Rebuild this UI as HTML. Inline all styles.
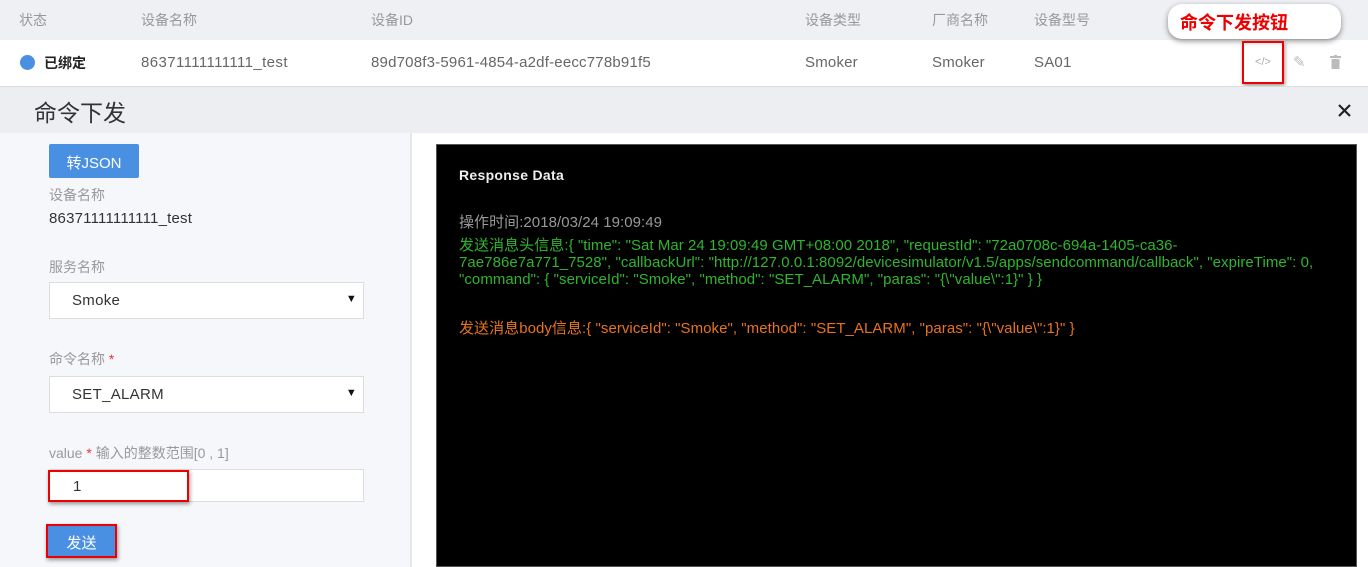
<!DOCTYPE html>
<html><head><meta charset="utf-8"><style>
*{margin:0;padding:0;box-sizing:border-box}
body{width:1368px;height:567px;overflow:hidden;position:relative;background:#fff;font-family:"Liberation Sans","Noto Sans CJK SC",sans-serif;font-size:14px;color:#333}
.a{position:absolute;white-space:nowrap}
.h{color:#999;font-size:14px;top:10px}
.r{color:#666;font-size:15px;letter-spacing:.2px;top:54px}
.lbl{color:#999;font-size:14px}
.sel{position:absolute;left:49px;width:315px;height:37px;background:#fff;border:1px solid #ddd;font-size:15px;letter-spacing:.3px;padding:9px 22px;color:#333}
.sel:after{content:"▼";position:absolute;right:6px;top:10px;font-size:11px;color:#111}
.resp{font-size:15px;line-height:17px;letter-spacing:.05px}
</style></head><body>
<div class="a" style="left:0;top:0;width:1368px;height:40px;background:#eff0f4"></div>
<div class="a h" style="left:19px">状态</div>
<div class="a h" style="left:141px">设备名称</div>
<div class="a h" style="left:371px">设备ID</div>
<div class="a h" style="left:805px">设备类型</div>
<div class="a h" style="left:932px">厂商名称</div>
<div class="a h" style="left:1034px">设备型号</div>
<div class="a" style="left:20px;top:55px;width:15px;height:15px;border-radius:50%;background:#4a90e2"></div>
<div class="a" style="left:44px;top:53px;font-weight:bold;color:#222">已绑定</div>
<div class="a r" style="left:141px;letter-spacing:.4px">86371111111111_test</div>
<div class="a r" style="left:371px">89d708f3-5961-4854-a2df-eecc778b91f5</div>
<div class="a r" style="left:805px">Smoker</div>
<div class="a r" style="left:932px">Smoker</div>
<div class="a r" style="left:1034px">SA01</div>
<div class="a" style="left:1168px;top:4px;width:173px;height:35px;background:#fff;border-radius:14px;box-shadow:0 2px 6px rgba(0,0,0,.45);color:#e00;font-weight:bold;font-size:18px;padding:5px 0 0 12px">命令下发按钮</div>
<div class="a" style="left:1242px;top:41px;width:42px;height:43px;border:2px solid #e00;box-shadow:1px 2px 4px rgba(0,0,0,.4);color:#aaa;font-size:11px;text-align:center;padding-top:13px">&lt;/&gt;</div>
<div class="a" style="left:1293px;top:53px;color:#bbb;font-size:15px">✎</div>
<svg class="a" style="left:1330px;top:55px" width="11" height="14"><rect x="0" y="1" width="11" height="2" fill="#bbb"/><rect x="1.5" y="4" width="8" height="10" fill="#bbb"/><rect x="4" y="0" width="3" height="2" fill="#bbb"/></svg>
<div class="a" style="left:0;top:86px;width:1368px;height:1px;background:#ddd"></div>
<div class="a" style="left:0;top:87px;width:1368px;height:46px;background:#eceef2"></div>
<div class="a" style="left:34px;top:94px;font-size:23px;color:#333">命令下发</div>
<svg class="a" style="left:1338px;top:104px" width="13" height="13"><path d="M1 1L12 12M12 1L1 12" stroke="#222" stroke-width="2.2"/></svg>
<div class="a" style="left:0;top:133px;width:412px;height:434px;background:#f6f7fb;border-right:2px solid #e6e7ea"></div>
<div class="a" style="left:49px;top:144px;width:90px;height:34px;background:#4a90e2;color:#fff;font-size:15px;text-align:center;padding-top:8px;border-radius:2px">转JSON</div>
<div class="a lbl" style="left:49px;top:185px">设备名称</div>
<div class="a" style="left:49px;top:210px;font-size:15px;letter-spacing:.2px;color:#333">86371111111111_test</div>
<div class="a lbl" style="left:49px;top:257px">服务名称</div>
<div class="sel" style="top:282px">Smoke</div>
<div class="a lbl" style="left:49px;top:349px">命令名称 <span style="color:#e33">*</span></div>
<div class="sel" style="top:376px">SET_ALARM</div>
<div class="a lbl" style="left:49px;top:443px">value <span style="color:#e33">*</span> 输入的整数范围[0 , 1]</div>
<div class="a" style="left:49px;top:469px;width:315px;height:33px;background:#fff;border:1px solid #ddd"></div>
<div class="a" style="left:48px;top:470px;width:141px;height:32px;border:2px solid #e00;box-shadow:1px 2px 4px rgba(0,0,0,.4);font-size:15px;padding:6px 0 0 23px;background:#fff">1</div>
<div class="a" style="left:46px;top:524px;width:71px;height:34px;border:2px solid #e00;box-shadow:1px 2px 4px rgba(0,0,0,.4);background:#4a90e2;color:#fff;font-size:15px;text-align:center;padding-top:6px">发送</div>
<div class="a" style="left:436px;top:144px;width:921px;height:423px;background:#000;border:1px solid #555"></div>
<div class="a" style="left:459px;top:167px;color:#eee;font-weight:bold;font-size:14px;letter-spacing:.3px">Response Data</div>
<div class="a resp" style="left:459px;top:214px;color:#999">操作时间:2018/03/24 19:09:49</div>
<div class="a resp" style="left:459px;top:237px;color:#2fb52f">发送消息头信息:{ "time": "Sat Mar 24 19:09:49 GMT+08:00 2018", "requestId": "72a0708c-694a-1405-ca36-<br>7ae786e7a771_7528", "callbackUrl": "http://127.0.0.1:8092/devicesimulator/v1.5/apps/sendcommand/callback", "expireTime": 0,<br>"command": { "serviceId": "Smoke", "method": "SET_ALARM", "paras": "{\"value\":1}" } }</div>
<div class="a resp" style="left:459px;top:320px;color:#e8731e">发送消息body信息:{ "serviceId": "Smoke", "method": "SET_ALARM", "paras": "{\"value\":1}" }</div>
</body></html>
